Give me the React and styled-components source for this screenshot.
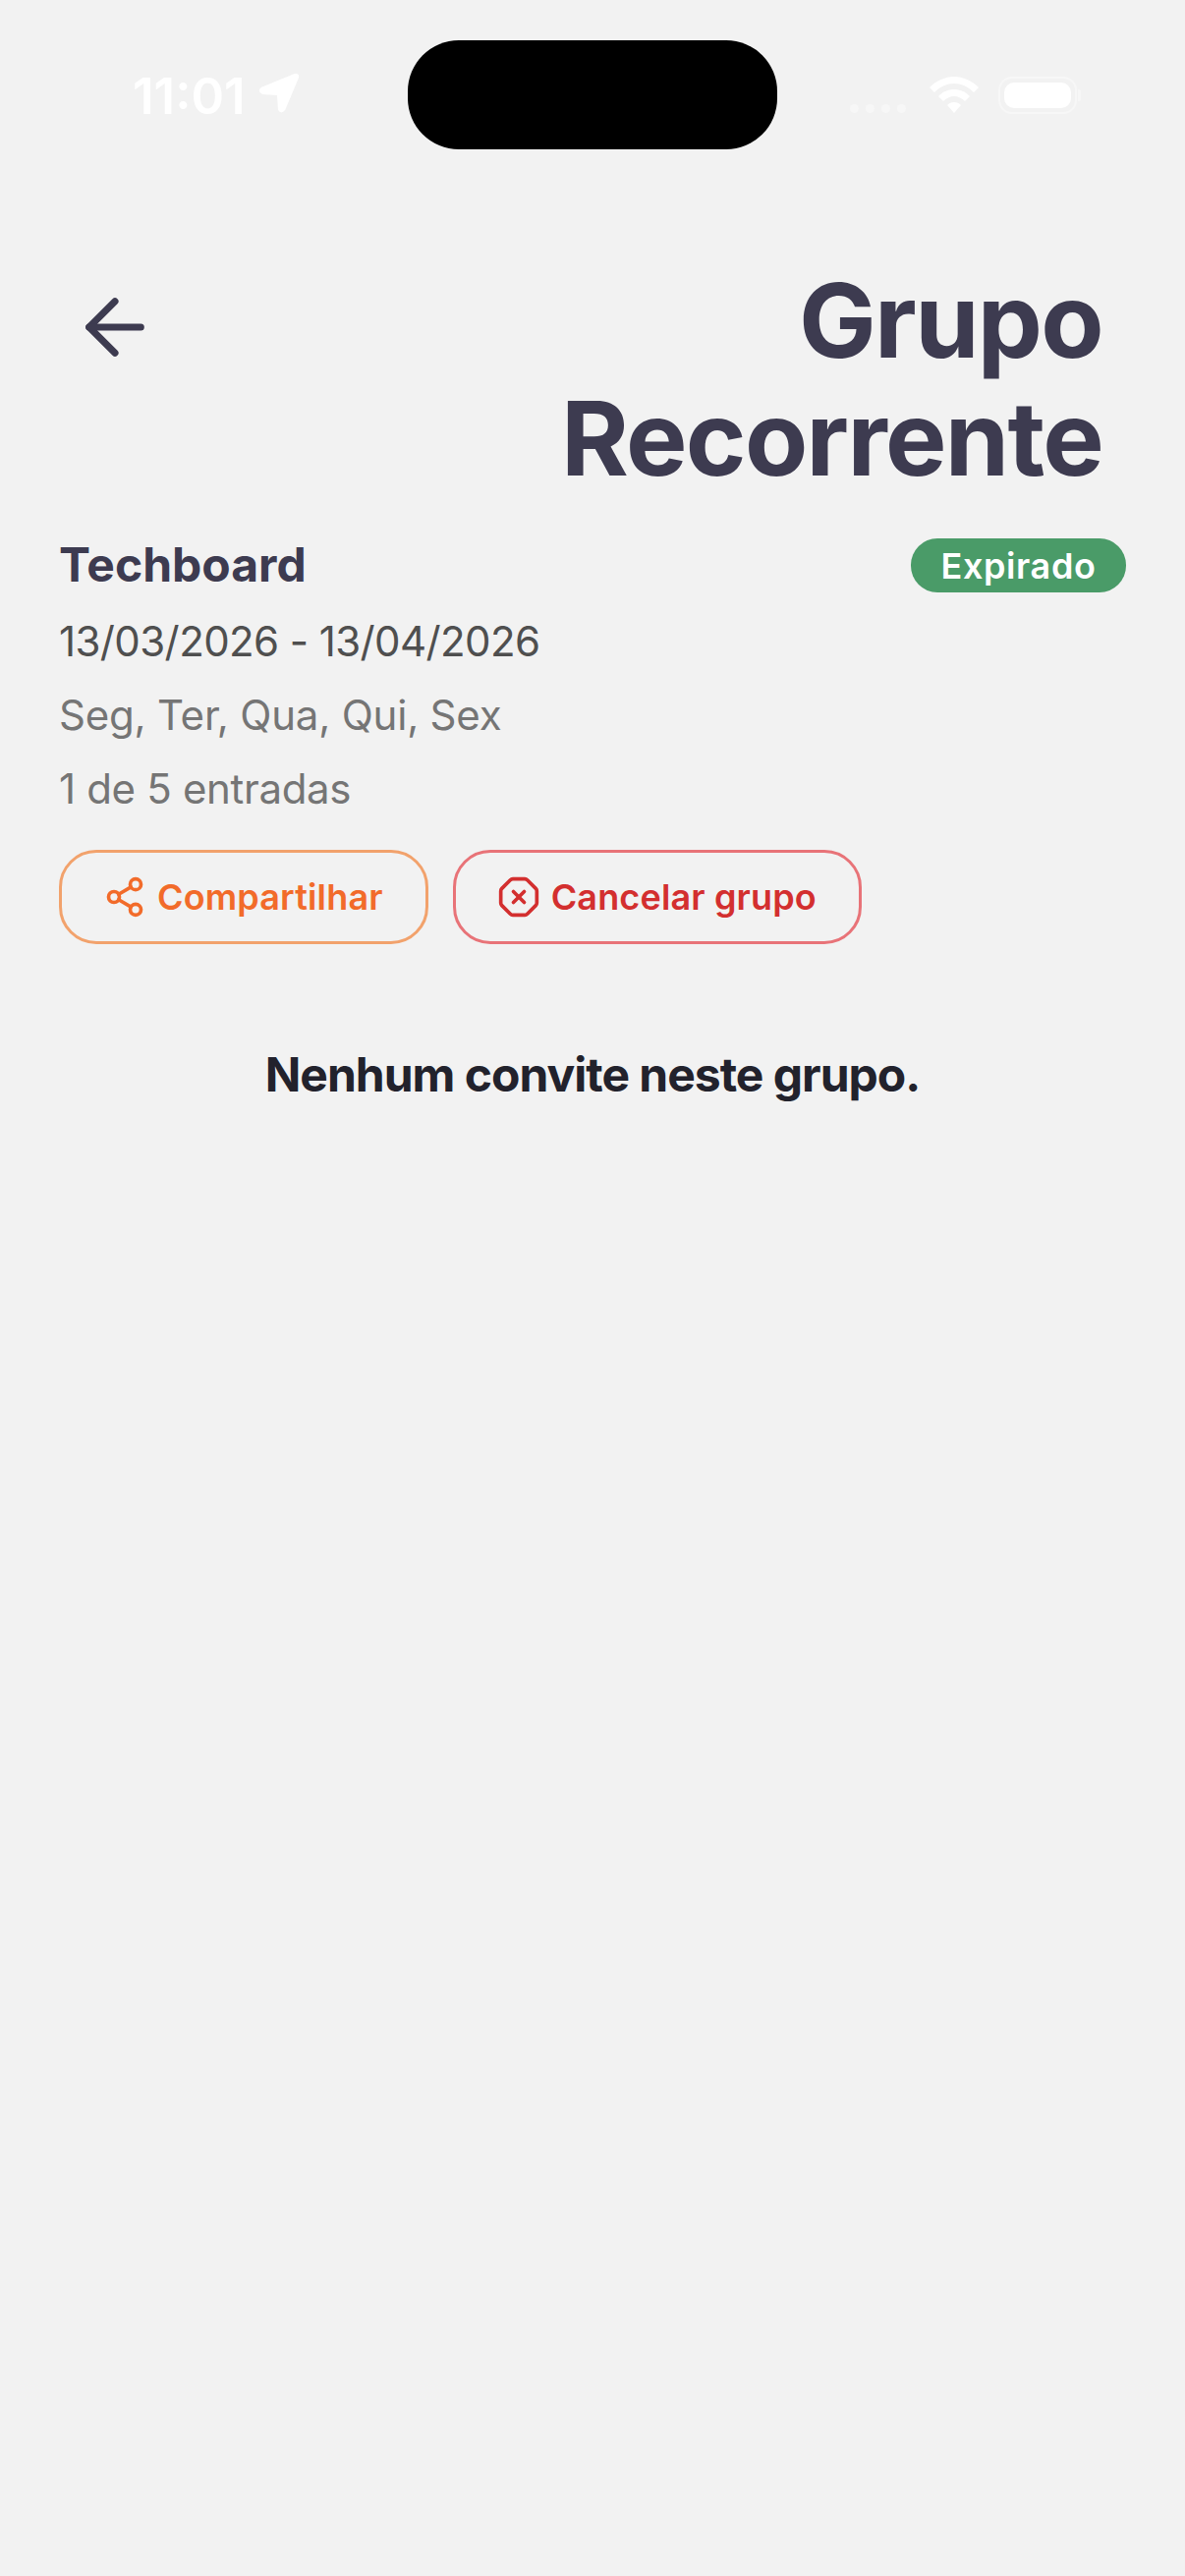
import React from 'react'
import styled, { createGlobalStyle } from 'styled-components'
import { ArrowLeft, Share2, OctagonX } from 'lucide-react'

const GlobalStyle = createGlobalStyle`
  html, body {
    margin: 0;
    padding: 0;
    background: #f2f2f2;
    font-family: "Inter", "Liberation Sans", sans-serif;
  }
`

const Page = styled.div`
  width: 1206px;
  height: 2622px;
  overflow: hidden;
  background: #f2f2f2;
`

const StatusBar = styled.div`
  display: flex;
  align-items: flex-start;
  height: 152px;
  padding-top: 41px;
  box-sizing: border-box;
`

const TimeGroup = styled.div`
  width: 415px;
  height: 111px;
  box-sizing: border-box;
  padding: 34px 0 0 135px;
  display: flex;
  align-items: flex-start;
  gap: 13px;
  color: #fff;
  font-size: 51px;
  font-weight: 600;
  line-height: 46px;
`

const LocationIcon = styled.svg`
  margin-top: -1px;
`

const Island = styled.div`
  width: 376px;
  height: 111px;
  border-radius: 52px;
  background: #000;
`

const Indicators = styled.div`
  flex: 1;
  height: 111px;
  box-sizing: border-box;
  padding: 37px 0 0 74px;
  display: flex;
  align-items: flex-start;
`

const Dots = styled.div`
  display: flex;
  gap: 7px;
  margin: 28px 24px 0 0;
`

const Dot = styled.span`
  width: 9px;
  height: 9px;
  border-radius: 50%;
  background: #f7f7f7;
`

const Battery = styled.div`
  position: relative;
  width: 80px;
  height: 38px;
  margin-left: 20px;
  box-sizing: border-box;
  padding: 4px;
  border: 2px solid #f7f7f7;
  border-radius: 14px;

  &::before {
    content: "";
    display: block;
    height: 100%;
    border-radius: 10px;
    background: #fff;
  }

  &::after {
    content: "";
    position: absolute;
    right: -6px;
    top: 11px;
    width: 3px;
    height: 12px;
    border-radius: 0 2px 2px 0;
    background: #f7f7f7;
  }
`

const Header = styled.header`
  display: flex;
  align-items: flex-start;
  padding: 114px 84px 0 72px;
`

const BackButton = styled.div`
  display: flex;
  margin-top: 22px;
  color: #3d3b50;
`

const Title = styled.h1`
  flex: 1;
  margin: 0;
  text-align: right;
  color: #3d3b50;
  font-size: 105px;
  font-weight: 700;
  line-height: 120px;
  letter-spacing: -1.7px;
`

const Info = styled.section`
  padding: 42px 60px 0 60px;
`

const NameRow = styled.div`
  display: flex;
  justify-content: space-between;
  align-items: flex-start;
  margin-bottom: 12px;
`

const Name = styled.div`
  color: #3d3b50;
  font-size: 48px;
  font-weight: 700;
  line-height: 53px;
`

const Badge = styled.span`
  display: flex;
  align-items: center;
  justify-content: center;
  width: 219px;
  height: 55px;
  border-radius: 27px;
  background: #4a9b68;
  color: #fff;
  font-size: 36px;
  font-weight: 600;
  letter-spacing: 0.6px;
`

const Line = styled.div`
  color: ${p => p.$color};
  font-size: 42px;
  font-weight: 400;
  line-height: 75px;
  letter-spacing: ${p => p.$spacing}px;
`

const Actions = styled.div`
  display: flex;
  gap: 25px;
  margin-top: 25px;
`

const Action = styled.div`
  display: flex;
  align-items: center;
  gap: 11px;
  height: 96px;
  box-sizing: border-box;
  padding: 0 43px 0 42px;
  border: 3px solid ${p => p.$border};
  border-radius: 38px;
  color: ${p => p.$color};
  font-size: 36px;
  font-weight: 600;
  letter-spacing: 0.15px;
`

const Empty = styled.p`
  margin: 103px 0 0;
  text-align: center;
  color: #22222c;
  font-size: 48px;
  font-weight: 700;
  line-height: 60px;
  letter-spacing: -1px;
`

function LocationArrow() {
  return (
    <LocationIcon width="42" height="42" viewBox="0 0 40 40" fill="#fff">
      <path d="M35 1 L3 14 Q-2 18 4 21 L18 22 L19 36 Q22 41 26 36 L39 5 Q40 0 35 1 Z" />
    </LocationIcon>
  )
}

function Wifi() {
  return (
    <svg width="50" height="38" viewBox="0 0 50 38" fill="#fff">
      <path d="M25 0 C34 0 43 4 50 11 L45 16 C39 10 32 7 25 7 C18 7 11 10 5 16 L0 11 C7 4 16 0 25 0 Z" />
      <path d="M25 13 C31 13 36 15 41 20 L36 25 C33 22 29 20 25 20 C21 20 17 22 14 25 L9 20 C14 15 19 13 25 13 Z" />
      <path d="M25 26 C28 26 30 27 32 29 L25 37 L18 29 C20 27 22 26 25 26 Z" />
    </svg>
  )
}

export default function App() {
  return (
    <Page>
      <GlobalStyle />
      <StatusBar>
        <TimeGroup>
          <span>11:01</span>
          <LocationArrow />
        </TimeGroup>
        <Island />
        <Indicators>
          <Dots>
            <Dot /><Dot /><Dot /><Dot />
          </Dots>
          <Wifi />
          <Battery />
        </Indicators>
      </StatusBar>

      <Header>
        <BackButton>
          <ArrowLeft size={90} strokeWidth={1.9} />
        </BackButton>
        <Title>Grupo<br />Recorrente</Title>
      </Header>

      <Info>
        <NameRow>
          <Name>Techboard</Name>
          <Badge>Expirado</Badge>
        </NameRow>
        <Line $color="#4f4f4f" $spacing={-0.6}>13/03/2026 - 13/04/2026</Line>
        <Line $color="#757575" $spacing={-0.22}>Seg, Ter, Qua, Qui, Sex</Line>
        <Line $color="#757575" $spacing={-0.33}>1 de 5 entradas</Line>
        <Actions>
          <Action $border="#f2a26c" $color="#f26b2a">
            <Share2 size={44} strokeWidth={2} />
            Compartilhar
          </Action>
          <Action $border="#e87378" $color="#d32f2f">
            <OctagonX size={44} strokeWidth={2} />
            Cancelar grupo
          </Action>
        </Actions>
      </Info>

      <Empty>Nenhum convite neste grupo.</Empty>
    </Page>
  )
}
